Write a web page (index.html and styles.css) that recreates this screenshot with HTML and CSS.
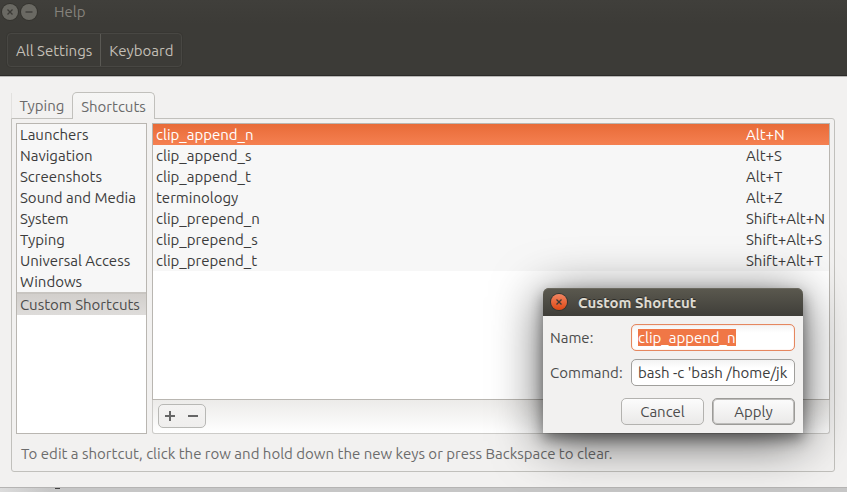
FILE: index.html
```html
<!DOCTYPE html>
<html lang="en">
<head>
<meta charset="utf-8">
<title>Keyboard</title>
<link rel="stylesheet" href="styles.css">
</head>
<body>
<div class="window">
  <header class="header">
    <div class="titlebar">
      <button class="wm" aria-label="Close"><svg viewBox="0 0 16 16"><path d="M5.5 5.5l5 5m0-5l-5 5"/></svg></button>
      <button class="wm" aria-label="Minimize"><svg viewBox="0 0 16 16"><path d="M4.5 8h7"/></svg></button>
      <span class="menu">Help</span>
    </div>
    <nav class="crumbs">
      <button class="crumb">All Settings</button>
      <button class="crumb">Keyboard</button>
    </nav>
  </header>
  <main class="content">
    <div class="tabs" role="tablist">
      <button class="tab" role="tab" aria-selected="false">Typing</button>
      <button class="tab tab-active" role="tab" aria-selected="true">Shortcuts</button>
    </div>
    <section class="panel">
      <div class="columns">
        <div class="categories">
          <button class="category">Launchers</button>
          <button class="category">Navigation</button>
          <button class="category">Screenshots</button>
          <button class="category">Sound and Media</button>
          <button class="category">System</button>
          <button class="category">Typing</button>
          <button class="category">Universal Access</button>
          <button class="category">Windows</button>
          <button class="category category-active">Custom Shortcuts</button>
        </div>
        <div class="shortcuts">
          <div class="list">
            <table class="table">
              <tbody>
                <tr class="selected"><td>clip_append_n</td><td class="keys">Alt+N</td></tr>
                <tr><td>clip_append_s</td><td class="keys">Alt+S</td></tr>
                <tr><td>clip_append_t</td><td class="keys">Alt+T</td></tr>
                <tr><td>terminology</td><td class="keys">Alt+Z</td></tr>
                <tr><td>clip_prepend_n</td><td class="keys">Shift+Alt+N</td></tr>
                <tr><td>clip_prepend_s</td><td class="keys">Shift+Alt+S</td></tr>
                <tr><td>clip_prepend_t</td><td class="keys">Shift+Alt+T</td></tr>
              </tbody>
            </table>
          </div>
          <div class="actions">
            <div class="pair">
              <button class="mini" aria-label="Add"><svg viewBox="0 0 10 10"><path d="M0 5h10M5 0v10"/></svg></button>
              <button class="mini" aria-label="Remove"><svg viewBox="0 0 10 10"><path d="M0 5h10"/></svg></button>
            </div>
          </div>
        </div>
      </div>
      <p class="hint">To edit a shortcut, click the row and hold down the new keys or press Backspace to clear.</p>
    </section>
  </main>
  <footer class="below"><span class="speck"></span></footer>

  <form class="dialog" role="dialog" aria-labelledby="dialog-title">
    <div class="dialog-bar">
      <button type="button" class="wm wm-close" aria-label="Close"><svg viewBox="0 0 16 16"><path d="M5.5 5.5l5 5m0-5l-5 5"/></svg></button>
      <h1 class="dialog-title" id="dialog-title">Custom Shortcut</h1>
    </div>
    <div class="fields">
      <label for="name">Name:</label>
      <div class="field field-focus"><input class="input input-selected" id="name" size="1" value="clip_append_n"></div>
      <label for="command">Command:</label>
      <div class="field"><input class="input" id="command" size="1" value="bash -c 'bash /home/jk"></div>
    </div>
    <div class="buttons">
      <button type="button" class="button">Cancel</button>
      <button type="button" class="button button-default">Apply</button>
    </div>
  </form>
</div>
</body>
</html>
```
FILE: styles.css
```css
* { box-sizing: border-box; }

body {
  margin: 0;
  background: #c6c6c6;
  color: #3c3c3c;
  font: 15px/21px "Ubuntu", "Noto Sans", sans-serif;
}

button, input {
  margin: 0;
  padding: 0;
  border: 0;
  background: none;
  color: inherit;
  font: inherit;
}

.window {
  position: relative;
  display: flex;
  flex-direction: column;
  min-height: 100vh;
  overflow: hidden;
}

.header {
  height: 76px;
  background: linear-gradient(#403f3b, #3c3b37 24px);
  border-bottom: 1px solid #2c2b29;
}

.titlebar {
  display: flex;
  align-items: center;
  gap: 3px;
  height: 23px;
  padding-left: 2px;
}

.wm {
  width: 16px;
  height: 16px;
  border-radius: 50%;
  background: #6a6963;
  box-shadow: 0 0 0 1px #35342f;
}

.wm svg { display: block; }

.wm path {
  fill: none;
  stroke: #3b3a36;
  stroke-width: 1.3;
}

.menu {
  margin-left: 14px;
  color: #85827c;
}

.crumbs {
  display: inline-flex;
  margin: 10px 7px;
  border: 1px solid #484743;
  border-radius: 4px;
  box-shadow: 0 0 0 1px #383733;
}

.crumb {
  min-width: 81px;
  height: 32px;
  padding: 0 8px;
  color: #c3bfb6;
}

.crumb + .crumb { border-left: 1px solid #5a5954; }

.content {
  flex: 1;
  display: flex;
  flex-direction: column;
  padding: 15px 12px 15px 11px;
  background: #f2f1f0;
  border-top: 1px solid #b9b8b6;
  border-bottom: 1px solid #b5b4b3;
}

.tabs {
  display: flex;
  align-items: flex-end;
  color: #6a6a6a;
}

.tab {
  height: 25px;
  width: 61px;
  border-left: 1px solid #e2e1df;
}

.tab-active {
  position: relative;
  width: 83px;
  height: 27px;
  margin-bottom: -1px;
  border: 1px solid #c1c0bc;
  border-bottom: 0;
  border-radius: 5px 5px 0 0;
  background: linear-gradient(#f6f6f5, #f2f1f0);
}

.panel {
  flex: 1;
  display: flex;
  flex-direction: column;
  padding: 4px;
  border: 1px solid #c1c0bc;
  border-radius: 0 3px 3px 3px;
}

.columns {
  flex: 1;
  display: flex;
  gap: 5px;
}

.categories {
  flex: 0 0 131px;
  border: 1px solid #b9b6b1;
  background: #fff;
}

.category {
  display: block;
  width: 100%;
  height: 21px;
  padding-left: 3px;
  background: #f7f7f7;
  text-align: left;
  white-space: nowrap;
}

.category-active {
  height: 23px;
  border-top: 2px solid #c8c5c1;
  background: linear-gradient(#d2cfcc, #dedcda);
  color: #4c4c4c;
}

.shortcuts {
  flex: 1;
  display: flex;
  flex-direction: column;
}

.list {
  flex: 1;
  border: 1px solid #b9b6b1;
  background: #fff;
}

.table {
  width: 100%;
  border-collapse: collapse;
  background: #f7f7f7;
}

.table td {
  height: 21px;
  padding: 0 3px;
  white-space: nowrap;
}

.table .keys {
  width: 86px;
}

.selected {
  background: linear-gradient(#e86b38, #f58051);
  color: #fff;
}

.actions {
  height: 34px;
  padding: 4px 5px;
  border: 1px solid #cccbc8;
  border-top: 0;
  border-radius: 0 0 3px 3px;
  background: linear-gradient(#ecebe9, #fff);
}

.pair {
  display: inline-flex;
  height: 24px;
  border: 1px solid #b8b8b5;
  border-radius: 5px;
  background: linear-gradient(#f4f3f2, #efeeed);
}

.mini {
  display: flex;
  align-items: center;
  justify-content: center;
  width: 22px;
}

.mini + .mini { width: 24px; }

.mini svg {
  width: 10px;
  height: 10px;
}

.mini path {
  stroke: #666;
  stroke-width: 2;
}

.hint {
  margin: 9px 5px 3px;
  color: #6c6c6c;
}

.below {
  height: 4px;
  padding-left: 55px;
  background: linear-gradient(90deg, #dcdcdc, #c6c6c6 50px);
}

.speck {
  display: block;
  width: 5px;
  height: 1px;
  background: #444;
}

.dialog {
  position: absolute;
  right: 44px;
  bottom: 59px;
  width: 260px;
  border-radius: 6px 6px 0 0;
  background: #f2f1f0;
  box-shadow: 0 6px 14px rgba(0, 0, 0, 0.4), 0 8px 50px rgba(0, 0, 0, 0.65);
  color: #4c4c4c;
}

.dialog-bar {
  display: flex;
  align-items: center;
  gap: 11px;
  height: 28px;
  padding-left: 8px;
  border-radius: 6px 6px 0 0;
  background: linear-gradient(#5b594f, #3f3e39);
  box-shadow: inset 0 1px #6b695f;
}

.wm-close { background: linear-gradient(#f28562, #dd4814); }

.dialog-title {
  margin: 0;
  color: #dfdbd2;
  font-size: 15px;
  text-shadow: 0 -1px #2c2b27;
}

.fields {
  display: grid;
  grid-template-columns: 73px 1fr;
  align-items: center;
  gap: 8px;
  padding: 8px 8px 0 7px;
}

.field {
  display: flex;
  align-items: center;
  height: 27px;
  padding: 0 6px;
  border: 1px solid #a09f9c;
  border-radius: 5px;
  background: linear-gradient(#f3f3f3, #fff 8px);
}

.field-focus {
  border-color: #e5875f;
  box-shadow: inset 0 0 1px #f0a080;
}

.input {
  flex: 1;
  min-width: 0;
  height: 17px;
  outline: 0;
  color: #3c3c3c;
}

.input-selected {
  flex: none;
  field-sizing: content;
  background: #f07746;
  color: #fff;
}

.buttons {
  display: flex;
  justify-content: flex-end;
  gap: 8px;
  padding: 12px 8px 8px;
}

.button {
  width: 83px;
  height: 27px;
  border: 1px solid #b3b2af;
  border-radius: 5px;
  background: linear-gradient(#fcfcfc, #eae9e8);
}

.button-default {
  border-color: #9c9b98;
  box-shadow: inset 0 0 0 1px #bdbcba;
}
```
